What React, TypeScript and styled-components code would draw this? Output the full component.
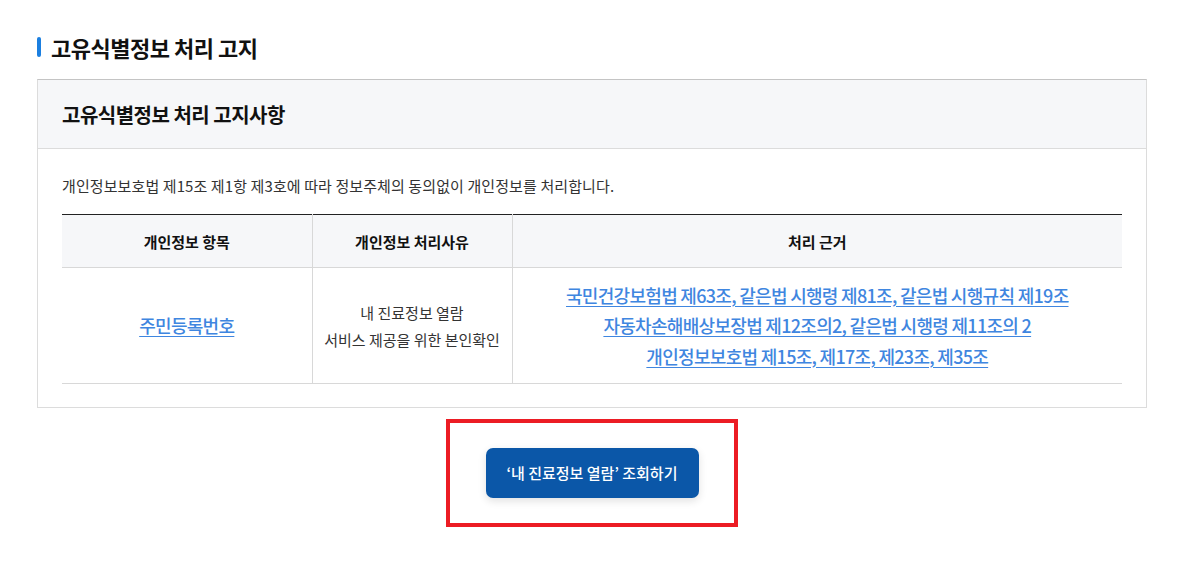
import React from "react";
import styled, { createGlobalStyle } from "styled-components";

const Global = createGlobalStyle`
  html, body { margin: 0; padding: 0; background: #fff; }
  body { font-family: "Noto Sans CJK KR", "Noto Sans", sans-serif; color: #222; }
  * { box-sizing: border-box; }
`;

const Page = styled.div`
  padding: 30px 44px 0 37px;
  width: 1190px;
`;

const Title = styled.h2`
  display: flex;
  align-items: center;
  gap: 10px;
  margin: 0 0 15px;
  font-size: 22px;
  font-weight: 700;
  line-height: 34px;
  letter-spacing: -0.5px;
  color: #111;
  &::before {
    content: "";
    width: 4px;
    height: 20px;
    border-radius: 2px;
    background: #1b7fe0;
  }
`;

const Box = styled.section`
  width: 1110px;
  border: 1px solid #dcdcdc;
  border-top-color: #c4c4c4;
`;

const BoxHead = styled.div`
  height: 69px;
  display: flex;
  align-items: center;
  padding: 0 24px;
  background: #f6f7f9;
  border-bottom: 1px solid #dcdcdc;
  font-size: 20px;
  font-weight: 700;
  letter-spacing: -0.5px;
  color: #111;
`;

const BoxBody = styled.div`
  padding: 26px 24px 23px;
`;

const Lead = styled.p`
  margin: 0 0 17px;
  font-size: 15px;
  line-height: 22px;
  letter-spacing: 0.1px;
  color: #333;
`;

const Table = styled.table`
  width: 100%;
  border-collapse: collapse;
  border-top: 1px solid #222;
`;

const Th = styled.th<{ $w?: number }>`
  width: ${(p) => (p.$w ? `${p.$w}px` : "auto")};
  height: 53px;
  background: #f6f7f9;
  font-size: 15px;
  font-weight: 700;
  letter-spacing: 0;
  color: #111;
  border-bottom: 1px solid #d8d8d8;
  & + & { border-left: 1px solid #d8d8d8; }
`;

const Td = styled.td`
  height: 116px;
  text-align: center;
  vertical-align: middle;
  border-bottom: 1px solid #d8d8d8;
  font-size: 15px;
  line-height: 27px;
  letter-spacing: 0;
  color: #333;
  & + & { border-left: 1px solid #d8d8d8; }
`;

const Link = styled.a`
  display: block;
  color: #3f86e0;
  text-decoration: underline;
  text-underline-offset: 3px;
  font-size: 18px;
  font-weight: 500;
  line-height: 30.5px;
  letter-spacing: -0.7px;
  cursor: pointer;
`;

const Actions = styled.div`
  display: flex;
  justify-content: center;
  margin-top: 11px;
  width: 1110px;
`;

const Highlight = styled.div`
  width: 292px;
  height: 108px;
  border: 4px solid #ec1c24;
  display: flex;
  align-items: center;
  justify-content: center;
  padding-bottom: 1px;
`;

const Button = styled.button`
  width: 213px;
  height: 50px;
  border: 0;
  border-radius: 7px;
  background: #0b57a8;
  color: #fff;
  font-family: inherit;
  font-size: 15px;
  font-weight: 500;
  letter-spacing: 0;
  box-shadow: 0 3px 8px rgba(0, 0, 0, 0.12);
  cursor: pointer;
`;

export default function App() {
  return (
    <>
      <Global />
      <Page>
        <Title>고유식별정보 처리 고지</Title>
        <Box>
          <BoxHead>고유식별정보 처리 고지사항</BoxHead>
          <BoxBody>
            <Lead>개인정보보호법 제15조 제1항 제3호에 따라 정보주체의 동의없이 개인정보를 처리합니다.</Lead>
            <Table>
              <thead>
                <tr>
                  <Th $w={250}>개인정보 항목</Th>
                  <Th $w={200}>개인정보 처리사유</Th>
                  <Th>처리 근거</Th>
                </tr>
              </thead>
              <tbody>
                <tr>
                  <Td>
                    <Link>주민등록번호</Link>
                  </Td>
                  <Td>
                    내 진료정보 열람
                    <br />
                    서비스 제공을 위한 본인확인
                  </Td>
                  <Td>
                    <Link>국민건강보험법 제63조, 같은법 시행령 제81조, 같은법 시행규칙 제19조</Link>
                    <Link>자동차손해배상보장법 제12조의2, 같은법 시행령 제11조의 2</Link>
                    <Link>개인정보보호법 제15조, 제17조, 제23조, 제35조</Link>
                  </Td>
                </tr>
              </tbody>
            </Table>
          </BoxBody>
        </Box>
        <Actions>
          <Highlight>
            <Button>‘내 진료정보 열람’ 조회하기</Button>
          </Highlight>
        </Actions>
      </Page>
    </>
  );
}
